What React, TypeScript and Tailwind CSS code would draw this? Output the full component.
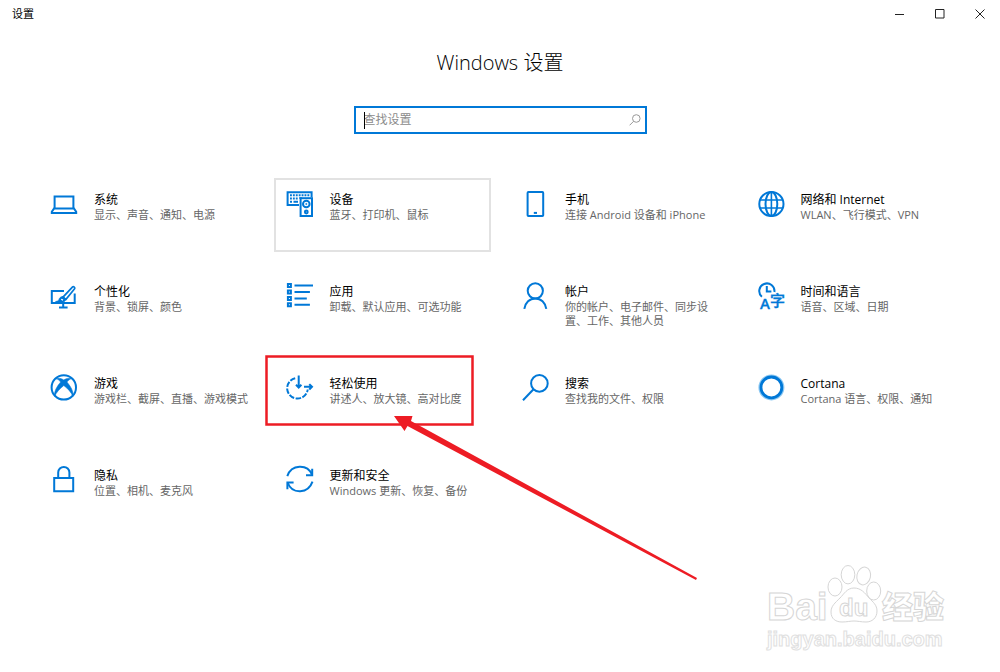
import type { ReactNode } from "react";

const cjk = "font-['Open_Sans','Noto_Sans_CJK_SC',sans-serif]";

function Icon({ children }: { children: ReactNode }) {
  return (
    <svg
      viewBox="0 0 28 28"
      className="h-7 w-7 shrink-0 overflow-visible"
      fill="none"
      stroke="#0078d7"
      strokeWidth="2"
      aria-hidden="true"
    >
      {children}
    </svg>
  );
}

const SystemIcon = () => (
  <Icon>
    <path d="M4.6 18.4V6.6h18.8v11.8" />
    <path d="M4 18.6h20l2.2 3.2v1.3H1.8v-1.3z" />
  </Icon>
);

const DevicesIcon = () => (
  <Icon>
    <path d="M13 15.1H1.6V2.2h24v5" />
    <path d="M4 5.2h19.500M4 8.4h8" strokeDasharray="1.9 1" />
    <path d="M4 11.700h2M7.500 11.700h4.500" />
    <path d="M13 8h3" strokeWidth="1.200" />
    <rect x="14.600" y="8.200" width="11.4" height="17.8" fill="#fff" />
    <circle cx="20.300" cy="14" r="3.300" />
    <circle cx="20.300" cy="14" r="0.6" strokeWidth="1" />
    <circle cx="20.300" cy="22" r="1.4" />
  </Icon>
);

const PhoneIcon = () => (
  <Icon>
    <rect x="6.6" y="2.1" width="15.6" height="24" rx="0.8" />
    <path d="M12.8 22.9h3.2" />
  </Icon>
);

const GlobeIcon = () => (
  <Icon>
    <circle cx="14.4" cy="14" r="12.1" />
    <ellipse cx="14.4" cy="14" rx="5.9" ry="12.1" />
    <path d="M14.4 2v24M3 10h22.8M3 18h22.8" strokeWidth="1.600" />
  </Icon>
);

const PersonalizeIcon = () => (
  <Icon>
    <path d="M14 9H1.800v12h22.9V11.500" />
    <path d="M13.2 21v4.500M9 25.4h8.6" />
    <path d="M13 15.2 22.6 4.9c.9-.9 2.9.8 2 1.9L16 17.4z" fill="#fff" strokeWidth="1.7" />
    <path d="M13 14.4c-2.800.2-3.800 2-4.100 3.400-.3 1-1.600 1.500-3.300 1.700 3.9 1.800 9.600 1.100 10.400-2.200z" fill="#0078d7" strokeWidth="0.8" />
    <path d="m11.200 17.300 1.800.8" stroke="#fff" strokeWidth="1.2" />
  </Icon>
);

const AppsIcon = () => (
  <Icon>
    <path d="M1.900 2.100h3v3h-3zM1.900 8.500h3v3h-3zM1.900 14.900h3v3h-3zM1.900 21.300h3v3h-3z" />
    <path d="M8.500 3.600H27M8.500 10h15.400M8.500 16.400h12.300M8.500 22.800h15.400" />
  </Icon>
);

const AccountIcon = () => (
  <Icon>
    <circle cx="14.3" cy="8.8" r="7.6" />
    <path d="M3.3 26.9C4.2 20.4 8.7 16.4 14.3 16.4s10.1 4 11 10.5" />
  </Icon>
);

const LanguageIcon = () => (
  <Icon>
    <path d="M4.9 14.8A7.6 7.6 0 1 1 17.4 10" />
    <path d="M9.8 3.9V9.4h4.6" />
    <text x="3" y="27" fill="#0078d7" stroke="#0078d7" strokeWidth="0.3" fontFamily="Open Sans" fontWeight="600" fontSize="15">A</text>
    <text x="13" y="24" fill="#0078d7" stroke="#0078d7" strokeWidth="0.4" fontFamily="Noto Sans CJK SC" fontWeight="500" fontSize="15">字</text>
  </Icon>
);

const GamingIcon = () => (
  <Icon>
    <circle cx="13.8" cy="13.4" r="12.2" />
    <path
      d="M6 4.800C8.300 3.400 11.200 4.400 13.800 6c2.600-1.600 5.500-2.600 7.800-1.200-1.600 0-3.400 1.600-4.700 3.200 3.600 4.200 7 9.700 6 14.400-1.400-3.800-5-7.800-9.100-10.900C9.700 14.600 6.100 18.600 4.700 22.400c-1-4.700 2.400-10.200 6-14.400C9.400 6.400 7.600 4.800 6 4.800z"
      fill="#0078d7"
      strokeWidth="0.6"
    />
  </Icon>
);

const EaseIcon = () => (
  <Icon>
    <path d="M9.200 4.200A10.300 10.300 0 1 0 21.700 15.500" strokeDasharray="5.500 1.500" />
    <path d="M12.700 1.600v12M10 10.800l2.700 2.700 2.700-2.700" />
    <path d="M18 12.800h8M23.300 10.100l2.700 2.700-2.700 2.700" />
  </Icon>
);

const SearchIcon = () => (
  <Icon>
    <circle cx="18.4" cy="9.4" r="8.3" />
    <path d="M12.500 15.300 2 26.200" />
  </Icon>
);

const CortanaIcon = () => (
  <Icon>
    <circle cx="14.4" cy="13.4" r="12" stroke="#8cc8f2" />
    <circle cx="14.4" cy="13.4" r="10.400" strokeWidth="2.800" />
  </Icon>
);

const PrivacyIcon = () => (
  <Icon>
    <path d="M4.200 12h19v13.300h-19z" />
    <path d="M8.200 12V6.500a5.600 5.600 0 0 1 11.200 0V12" />
  </Icon>
);

const UpdateIcon = () => (
  <Icon>
    <path d="M1.300 10.200C5.500-1.800 21.300-2.200 26 8.700" />
    <path d="M26.200 2.800v6.400H20" />
    <path d="M26.500 15.700C22.300 27.900 6.300 28.500 1.800 17" />
    <path d="M1.400 23.200v-6.600H7.600" />
  </Icon>
);

type Category = { title: string; detail: string; icon: () => ReactNode; hovered?: boolean; marked?: boolean };

const categories: Category[] = [
  { title: "系统", detail: "显示、声音、通知、电源", icon: SystemIcon },
  { title: "设备", detail: "蓝牙、打印机、鼠标", icon: DevicesIcon, hovered: true },
  { title: "手机", detail: "连接 Android 设备和 iPhone", icon: PhoneIcon },
  { title: "网络和 Internet", detail: "WLAN、飞行模式、VPN", icon: GlobeIcon },
  { title: "个性化", detail: "背景、锁屏、颜色", icon: PersonalizeIcon },
  { title: "应用", detail: "卸载、默认应用、可选功能", icon: AppsIcon },
  { title: "帐户", detail: "你的帐户、电子邮件、同步设置、工作、其他人员", icon: AccountIcon },
  { title: "时间和语言", detail: "语音、区域、日期", icon: LanguageIcon },
  { title: "游戏", detail: "游戏栏、截屏、直播、游戏模式", icon: GamingIcon },
  { title: "轻松使用", detail: "讲述人、放大镜、高对比度", icon: EaseIcon, marked: true },
  { title: "搜索", detail: "查找我的文件、权限", icon: SearchIcon },
  { title: "Cortana", detail: "Cortana 语言、权限、通知", icon: CortanaIcon },
  { title: "隐私", detail: "位置、相机、麦克风", icon: PrivacyIcon },
  { title: "更新和安全", detail: "Windows 更新、恢复、备份", icon: UpdateIcon },
];

function Callout() {
  return (
    <svg
      className="pointer-events-none absolute -top-[7px] -left-[9px] z-10 h-[226px] w-[434px]"
      viewBox="0 0 434 226"
      fill="#ed1c24"
      aria-hidden="true"
    >
      <rect x="1.500" y="1.500" width="206" height="68" fill="none" stroke="#ed1c24" strokeWidth="2.500" />
      <path d="M129 61 147.500 61 146 66 432 223 431 225 142.500 71 139.500 76z" />
    </svg>
  );
}

function Tile({ item }: { item: Category }) {
  const Glyph = item.icon;
  return (
    <li className="relative">
      <a
        href="#"
        className={`flex min-h-[74px] gap-4 border-2 py-[10px] pr-1 pl-[10px] ${item.hovered ? "border-[#e2e2e2]" : "border-transparent"}`}
      >
        <Glyph />
        <span className="flex min-w-0 flex-col pt-0.5">
          <span className="text-[12px] leading-4 text-black">{item.title}</span>
          <span className="text-[11px] leading-[14px] text-[#666]">{item.detail}</span>
        </span>
      </a>
      {item.marked && <Callout />}
    </li>
  );
}

function Watermark() {
  return (
    <svg
      className="pointer-events-none absolute right-[50px] bottom-4 h-24 w-[186px]"
      viewBox="0 0 186 96"
      fill="#fff"
      stroke="#d6d6d6"
      strokeWidth="1"
      aria-hidden="true"
    >
      <text x="3" y="60" fontFamily="Liberation Sans" fontWeight="700" fontSize="39">Bai</text>
      <ellipse cx="71" cy="27" rx="7" ry="9" />
      <ellipse cx="84" cy="14.700" rx="6.800" ry="9.200" />
      <ellipse cx="99.700" cy="16" rx="6.800" ry="9" transform="rotate(12 99.700 16)" />
      <ellipse cx="109.700" cy="31" rx="7" ry="9" />
      <path d="M90 28c-7 0-10 6-14 10-5 5-9 8-9 14 0 7 5 10 11 10 5 0 8-1 12-1s7 1 12 1c6 0 11-4 11-11 0-6-4-9-8-13-4-5-8-10-15-10z" />
      <text x="75" y="56" fontFamily="Liberation Sans" fontWeight="700" fontSize="24">du</text>
      <text x="118" y="58" fontFamily="Noto Sans CJK SC" fontWeight="900" fontSize="31">经验</text>
      <text x="3" y="86" fontFamily="Liberation Sans" fontWeight="700" fontSize="20" stroke="#e0e0e0">jingyan.baidu.com</text>
    </svg>
  );
}

const controlClass = "flex h-7 w-10 items-center justify-center";

export default function App() {
  return (
    <div className={`relative min-h-screen overflow-hidden bg-white text-black ${cjk}`}>
      <header className="flex h-7 items-center justify-between pl-3">
        <span className="text-[11px] leading-4">设置</span>
        <div className="flex">
          <button type="button" aria-label="最小化" className={controlClass}>
            <svg viewBox="0 0 10 10" className="h-[10px] w-[10px]" stroke="#222" fill="none"><path d="M0 5.500h9" /></svg>
          </button>
          <button type="button" aria-label="最大化" className={controlClass}>
            <svg viewBox="0 0 10 10" className="h-[10px] w-[10px]" stroke="#222" fill="none"><path d="M.5.5h8.500v8.500H.5z" /></svg>
          </button>
          <button type="button" aria-label="关闭" className={controlClass}>
            <svg viewBox="0 0 10 10" className="h-[10px] w-[10px]" stroke="#222" fill="none"><path d="m.5.500 9 9m0-9-9 9" /></svg>
          </button>
        </div>
      </header>

      <main className="flex flex-col items-center">
        <h1 className="mt-[19px] text-[20px] leading-8 font-light">Windows 设置</h1>

        <div className="relative mt-[27px] flex h-7 w-[293px] items-center border-2 border-[#0078d7] pr-1 pl-2">
          <span className="absolute left-2 h-[17px] w-px bg-black" />
          <input
            type="text"
            aria-label="查找设置"
            placeholder="查找设置"
            className="min-w-0 flex-1 bg-transparent text-[12px] leading-4 outline-none placeholder:text-[#8c8c8c]"
          />
          <svg viewBox="0 0 12 12" className="h-3 w-3" fill="none" stroke="#999" aria-hidden="true">
            <circle cx="7.300" cy="4.500" r="3.800" />
            <path d="M4.600 7.300.6 11.300" />
          </svg>
        </div>

        <ul className="mt-11 grid w-full grid-cols-4 gap-[18px] px-[38px]">
          {categories.map((item) => (
            <Tile key={item.title} item={item} />
          ))}
        </ul>
      </main>

      <Watermark />
    </div>
  );
}
